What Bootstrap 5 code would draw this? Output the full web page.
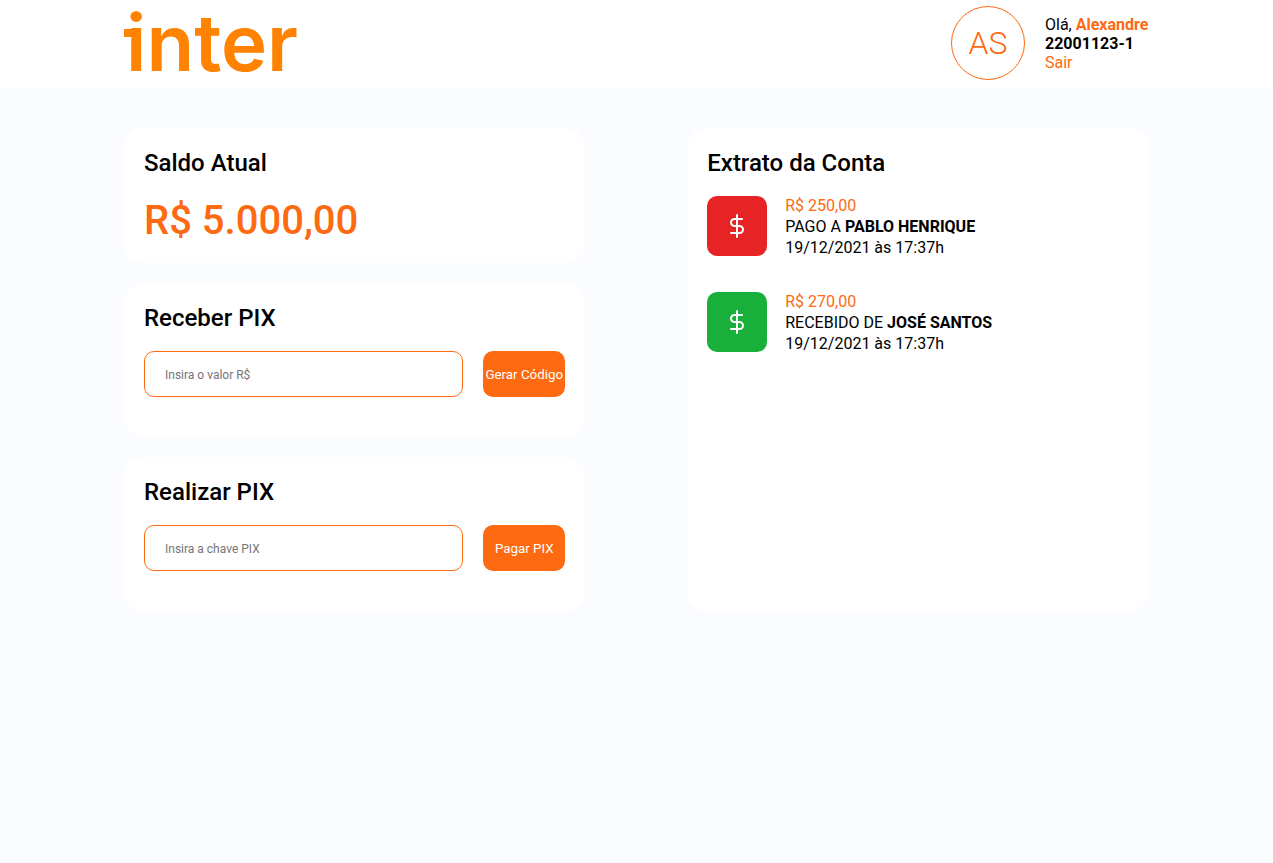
<!DOCTYPE html>
<html lang="pt-BR">
<head>
<meta charset="utf-8">
<meta name="viewport" content="width=device-width, initial-scale=1">
<title>Inter - Minha conta</title>
<link href="https://cdn.jsdelivr.net/npm/bootstrap@5.3.0/dist/css/bootstrap.min.css" rel="stylesheet">
<style>
  :root { --brand: #fd6a11; --logo: #ff8200; }
  body { background: #fbfcff; color: #000; font-family: Roboto, sans-serif; line-height: 21px; }
  .wrap { max-width: 1025px; }
  .topbar { padding: 6px 0 8px; }
  .brand-color, .brand-color:hover { color: var(--brand); }
  .logo-word { padding-left: 2px; color: var(--logo); font: 600 78px/74px Inter, sans-serif; }
  /* the bar on the left of the first letter */
  .logo-word::before { content: ""; position: absolute; left: 0; top: 23px; width: 12px; height: 8px; background: var(--logo); }
  .avatar { width: 74px; height: 74px; border: 1px solid var(--brand); font-size: 32px; font-weight: 300; }
  .account { width: 104px; line-height: 19px; }
  .page { padding: 40px 0; }
  .columns { gap: 20px 102px; }
  .side { width: 45%; }
  .stack { gap: 20px; }
  .panel { border: 0; border-radius: 20px; padding: 20px 20px 18px; gap: 18px; color: #000; background: #fff; }
  .panel-title { font-size: 24px; line-height: 30px; font-weight: 500; margin: 0; }
  .balance { font-size: 40px; line-height: 49px; font-weight: 500; }
  .pix-form { padding-bottom: 22px; }
  .pix-input { height: 46px; padding: 2px 20px 0; border: 1px solid var(--brand); border-radius: 10px; font-size: 12px; line-height: normal; }
  .pix-input::placeholder { color: #757575; }
  .pix-btn, .pix-btn:hover { width: 82px; height: 46px; padding: 0; border: 0; border-radius: 10px; background: var(--brand); color: #fff; font-size: smaller; line-height: normal; }
  .entries { margin: 0; gap: 32px; }
  .entries { margin-top: -2px; }
  .entry { gap: 18px; min-height: 64px; }
  .entry-icon { width: 60px; height: 60px; border-radius: 10px; }
  .paid { background: #e72425; }
  .received { background: #18b03a; }
  @media (max-width: 767px) {
    .wrap { padding: 0 16px; }
    .side { width: 100%; }
  }
</style>
</head>
<body>
<header class="bg-white topbar">
  <div class="wrap mx-auto d-flex justify-content-between align-items-center">
    <div class="logo-word position-relative">inter</div>
    <div class="d-flex align-items-center stack">
      <div class="avatar rounded-circle brand-color d-flex align-items-center justify-content-center">AS</div>
      <div class="account text-nowrap">
        <div>Olá, <strong class="brand-color">Alexandre</strong></div>
        <div><strong>22001123-1</strong></div>
        <a href="#" class="d-block text-decoration-none brand-color">Sair</a>
      </div>
    </div>
  </div>
</header>
<main class="page">
  <div class="wrap mx-auto d-flex flex-wrap flex-md-nowrap columns">
    <div class="side d-flex flex-column stack">
      <section class="card panel">
        <h2 class="panel-title">Saldo Atual</h2>
        <div class="balance brand-color">R$ 5.000,00</div>
      </section>
      <section class="card panel">
        <h2 class="panel-title">Receber PIX</h2>
        <form class="pix-form d-flex stack">
          <input class="form-control pix-input" type="text" placeholder="Insira o valor R$" aria-label="Valor a receber">
          <button class="btn pix-btn flex-shrink-0 text-nowrap" type="button">Gerar Código</button>
        </form>
      </section>
      <section class="card panel">
        <h2 class="panel-title">Realizar PIX</h2>
        <form class="pix-form d-flex stack">
          <input class="form-control pix-input" type="text" placeholder="Insira a chave PIX" aria-label="Chave PIX">
          <button class="btn pix-btn flex-shrink-0 text-nowrap" type="button">Pagar PIX</button>
        </form>
      </section>
    </div>
    <section class="side card panel">
      <h2 class="panel-title">Extrato da Conta</h2>
      <ul class="entries list-unstyled d-flex flex-column">
        <li class="entry d-flex align-items-center">
          <span class="entry-icon paid d-flex align-items-center justify-content-center">
            <svg width="24" height="24" viewBox="0 0 24 24" fill="none" stroke="#fff" stroke-width="2" stroke-linecap="round" stroke-linejoin="round" aria-hidden="true"><path d="M12 1v22M17 5H9.500a3.500 3.500 0 0 0 0 7h5a3.500 3.500 0 0 1 0 7H6"/></svg>
          </span>
          <div>
            <div class="brand-color">R$ 250,00</div>
            <div>PAGO A <strong>PABLO HENRIQUE</strong></div>
            <div>19/12/2021 às 17:37h</div>
          </div>
        </li>
        <li class="entry d-flex align-items-center">
          <span class="entry-icon received d-flex align-items-center justify-content-center">
            <svg width="24" height="24" viewBox="0 0 24 24" fill="none" stroke="#fff" stroke-width="2" stroke-linecap="round" stroke-linejoin="round" aria-hidden="true"><path d="M12 1v22M17 5H9.500a3.500 3.500 0 0 0 0 7h5a3.500 3.500 0 0 1 0 7H6"/></svg>
          </span>
          <div>
            <div class="brand-color">R$ 270,00</div>
            <div>RECEBIDO DE <strong>JOSÉ SANTOS</strong></div>
            <div>19/12/2021 às 17:37h</div>
          </div>
        </li>
      </ul>
    </section>
  </div>
</main>
<script src="https://cdn.jsdelivr.net/npm/bootstrap@5.3.0/dist/js/bootstrap.bundle.min.js"></script>
</body>
</html>
